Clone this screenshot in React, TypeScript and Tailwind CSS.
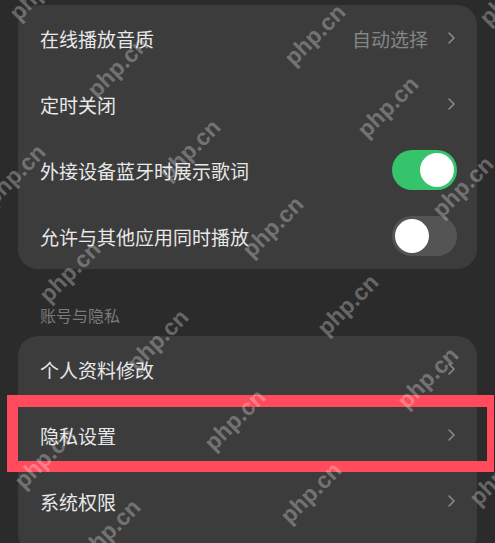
import React from "react";

const Chevron = () => (
  <svg width="9" height="14" viewBox="0 0 9 14" fill="none" className="shrink-0">
    <path d="M2 2l5 5-5 5" stroke="#8a8a8a" strokeWidth="1.6" strokeLinecap="round" strokeLinejoin="round" />
  </svg>
);

const Toggle = ({ on }: { on: boolean }) => (
  <div
    className={
      on
        ? "w-[65px] h-[40px] rounded-full bg-[#35c46b] flex items-center justify-end pr-[3px] shrink-0"
        : "w-[65px] h-[40px] rounded-full bg-[#545454] flex items-center justify-start pl-[3px] shrink-0"
    }
  >
    <div className="w-[34px] h-[34px] rounded-full bg-white" />
  </div>
);

const Row = ({ label, children }: { label: string; children?: React.ReactNode }) => (
  <div className="h-[66px] flex items-center justify-between pl-[22px] pr-[21px]">
    <span className="text-[19px] text-[#e8e8e8] leading-none">{label}</span>
    <div className="flex items-center gap-[19px]">{children}</div>
  </div>
);

// watermark centres, measured from the screenshot
const marks: [number, number][] = [
  [40, -10], [118, 67], [315, 35], [510, -5], [190, 150], [388, 107],
  [15, 175], [463, 187], [273, 227], [70, 272], [348, 305], [158, 340],
  [428, 378], [235, 420], [45, 458], [311, 493], [110, 530], [500, 475],
];

const App: React.FC = () => {
  return (
    <div
      className="relative w-[495px] h-[543px] overflow-hidden bg-[#2b2b2b] px-[18px] pt-[5px]"
      style={{ fontFamily: '"Noto Sans CJK SC", "Noto Sans", sans-serif' }}
    >
      <div className="rounded-[20px] bg-[#3c3c3c]">
        <Row label="在线播放音质">
          <span className="text-[19px] text-[#858585] leading-none">自动选择</span>
          <Chevron />
        </Row>
        <Row label="定时关闭">
          <Chevron />
        </Row>
        <div className="h-[66px] flex items-center justify-between pl-[22px] pr-[20px]">
          <span className="text-[19px] text-[#e8e8e8] leading-none">外接设备蓝牙时展示歌词</span>
          <Toggle on />
        </div>
        <div className="h-[66px] flex items-center justify-between pl-[22px] pr-[20px]">
          <span className="text-[19px] text-[#e8e8e8] leading-none">允许与其他应用同时播放</span>
          <Toggle on={false} />
        </div>
      </div>

      <div className="h-[67px] pt-[34px] pl-[22px]">
        <span className="text-[16px] leading-none text-[#7a7a7a]">账号与隐私</span>
      </div>

      <div className="rounded-[20px] bg-[#3c3c3c] pb-[20px]">
        <Row label="个人资料修改">
          <Chevron />
        </Row>
        <Row label="隐私设置">
          <Chevron />
        </Row>
        <Row label="系统权限">
          <Chevron />
        </Row>
      </div>

      {/* highlight box */}
      <div className="absolute left-[7px] top-[395px] w-[487px] h-[77px] border-[#ff4b5c] border-t-[12px] border-b-[11px] border-l-[11px] border-r-[7px]" />

      {/* php.cn watermarks */}
      {marks.map(([x, y], i) => (
        <span
          key={i}
          className="absolute -translate-x-1/2 -translate-y-1/2 -rotate-45 text-[23px] font-bold text-white/30 leading-none whitespace-nowrap pointer-events-none"
          style={{ left: x, top: y, fontFamily: '"Liberation Sans", Arial, sans-serif' }}
        >
          php.cn
        </span>
      ))}
    </div>
  );
};

export default App;
